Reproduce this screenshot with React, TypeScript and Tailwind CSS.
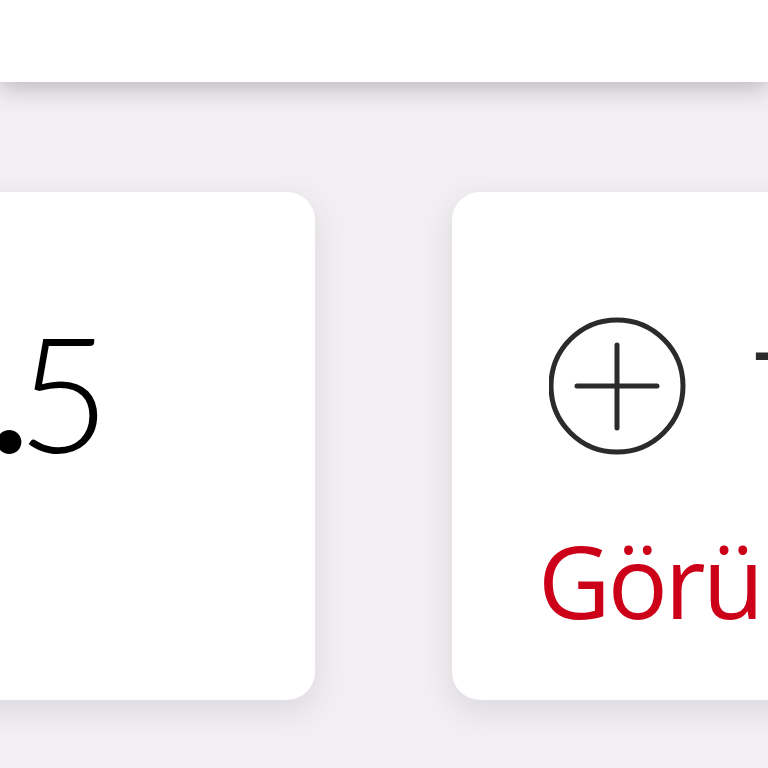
export default function App() {
  return (
    <div className="h-[768px] w-[768px] overflow-hidden bg-[#f2eff2]">
      <header className="relative z-10 h-[82px] bg-white shadow-[0_6px_22px_rgba(60,50,70,0.3)]" />
      <main className="mt-[110px] flex gap-[137px]">
        <section className="-ml-[85px] flex h-[508px] w-[400px] shrink-0 items-start justify-end rounded-[28px] bg-white pr-[205px] pt-[119px] shadow-[0_10px_30px_rgba(60,50,70,0.12)]">
          <span className="whitespace-nowrap font-['Lato',sans-serif] text-[160px] font-light leading-none text-black">
            2<span className="-mr-[11px] font-bold">.</span>5
          </span>
        </section>
        <section className="flex h-[508px] w-[520px] shrink-0 flex-col rounded-[28px] bg-white pl-[86px] pt-[124px] shadow-[0_10px_30px_rgba(60,50,70,0.12)]">
          <div className="flex items-center gap-[66px] pl-[11px]">
            <svg width="140" height="140" viewBox="0 0 140 140" fill="none" stroke="#2b2b2b" strokeWidth="5" strokeLinecap="round" className="shrink-0">
              <circle cx="68" cy="70" r="66" />
              <path d="M28 70h80M68 29v83" />
            </svg>
            <span className="whitespace-nowrap font-['Open_Sans',sans-serif] text-[100px] leading-none text-[#2b2b2b]">Teklif</span>
          </div>
          <div className="mt-[74px] whitespace-nowrap font-['Open_Sans',sans-serif] text-[100px] leading-none tracking-[-3px] text-[#cc0018]">
            Görüntüle
          </div>
        </section>
      </main>
    </div>
  )
}
